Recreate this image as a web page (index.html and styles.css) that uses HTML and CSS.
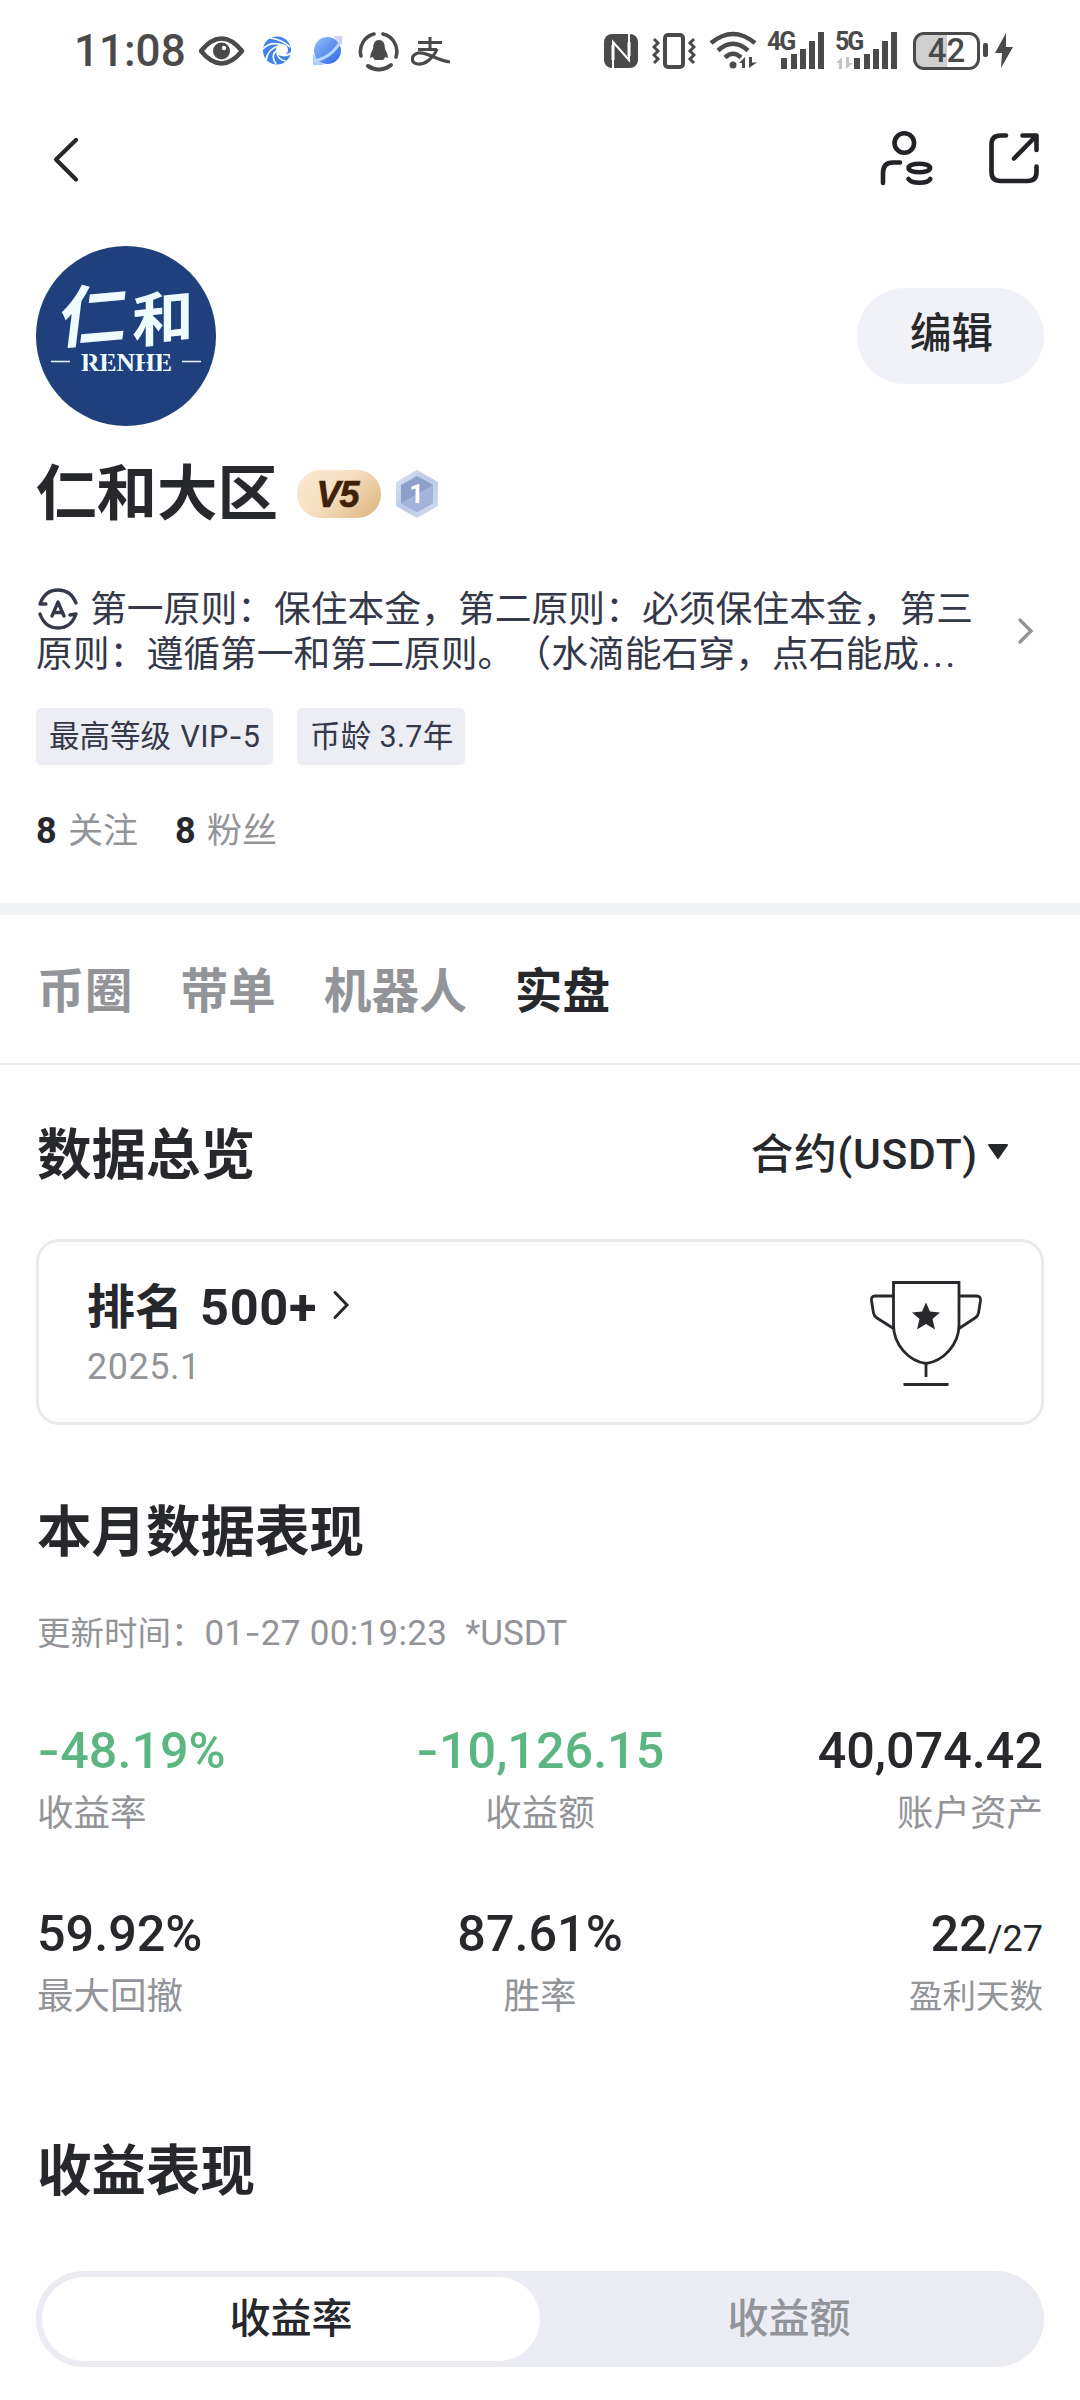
FILE: index.html
```html
<!DOCTYPE html>
<html lang="zh-CN">
<head>
<meta charset="utf-8">
<title>仁和大区</title>
<link rel="stylesheet" href="styles.css">
</head>
<body>
<div class="page">
  <div class="status">
    <div class="status-left">
      <span class="time">11:08</span>
      <svg width="46" height="40" viewBox="199 32 46 40"><path d="M201 52Q221.500 27 242 52Q221.500 77 201 52Z" fill="none" stroke="#4a4a4a" stroke-width="4.500" stroke-linejoin="round"/><circle cx="221.500" cy="52" r="8.500" fill="#4a4a4a"/><circle cx="224" cy="49" r="2.200" fill="#fff"/></svg>
      <svg class="ml-swirl" width="30" height="40" viewBox="262 32 30 40"><circle cx="277" cy="51.500" r="14" fill="#3f82ea"/><circle cx="282" cy="51" r="6" fill="#fff"/><g fill="none" stroke="#fff" stroke-width="1.700"><path d="M270 39Q281 40 290 48"/><path d="M263 50Q270 42 282 46"/><path d="M266 61Q268 50 278 47"/><path d="M276 65Q270 57 277 51"/><path d="M286 62Q278 61 277 54"/><path d="M291 54Q286 58 281 56"/></g></svg>
      <svg class="ml-planet" width="32" height="40" viewBox="311 32 32 40"><defs><linearGradient id="pl" x1="0" y1="0" x2="1" y2="1"><stop offset="0" stop-color="#8fc2f8"/><stop offset="1" stop-color="#2f62e8"/></linearGradient></defs><path d="M333 37H342V46Z" fill="#d9cdf2"/><path d="M313 55V66H324Z" fill="#a9d0fb"/><circle cx="327.500" cy="51.500" r="13.500" fill="url(#pl)"/><path d="M314 62Q331 59 341 42" fill="none" stroke="#b8d8ff" stroke-width="3"/></svg>
      <svg class="ml-qq" width="42" height="42" viewBox="358 30 42 42"><g fill="none" stroke="#4a4a4a" stroke-linecap="round"><path d="M361 56A18 18 0 0 1 374 34" stroke-width="3.500"/><path d="M383 34A18 18 0 0 1 396 57" stroke-width="3.500"/><path d="M391 65A19 19 0 0 1 368 66" stroke-width="4"/></g><path d="M379 40q6 0 6 9q3 5 3 9l-3-1q-1 3-2 3h-8q-1 0-2-3l-3 1q0-4 3-9q0-9 6-9Z" fill="#4a4a4a"/></svg>
      <svg class="ml-ali" width="40" height="34" viewBox="411 34 40 34"><g fill="none" stroke="#4a4a4a" stroke-width="3"><path d="M418 42.500H442M430 37V49M418 49.500H437"/><path d="M437 49C433 59 424 65 418 64C410 63 411 55 418 53C427 51 437 61 450 62" stroke-width="3.200"/></g></svg>
    </div>
    <div class="status-right">
      <svg width="34" height="36" viewBox="604 33 34 36"><rect x="604" y="34" width="34" height="34" rx="8" fill="#4a4a4a"/><path d="M613 68V42L629 60V33" fill="none" stroke="#fff" stroke-width="2"/><path d="M613 45V60M629 42V56" stroke="#fff" stroke-width="3"/></svg>
      <svg class="ml-vib" width="44" height="38" viewBox="652 32 44 38"><rect x="665" y="35" width="18" height="32" rx="3" fill="none" stroke="#4a4a4a" stroke-width="4"/><g fill="none" stroke="#4a4a4a" stroke-width="3"><path d="M654 39l4 4l-4 4l4 4l-4 4l4 4l-4 4M694 39l-4 4l4 4l-4 4l4 4l-4 4l4 4"/></g></svg>
      <svg class="ml-wifi" width="48" height="40" viewBox="709 31 48 40"><g fill="none" stroke="#4a4a4a" stroke-width="4.500"><path d="M711 43Q733 25 755 43M718 50.500Q733 37 748 50.500M725 57.500Q733 50 741 57.500"/></g><circle cx="733" cy="65" r="3.500" fill="#4a4a4a"/><path d="M745 57V68H742V63H739ZM749 57V68L757 62.500H752V57Z" fill="#4a4a4a"/></svg>
      <div class="signal ml-4g"><span class="net">4G</span><svg width="58" height="38" viewBox="767 32 58 38"><path d="M781 58h6v11h-6ZM791 54h6v15h-6ZM800 49h6v20h-6ZM809 41h6v28h-6ZM818 32h6v37h-6Z" fill="#4a4a4a"/></svg></div>
      <div class="signal ml-5g"><span class="net">5G</span><svg width="64" height="38" viewBox="835 32 64 38"><path d="M842 57V69H839V63H836ZM846 57V69L853 63H849V57Z" fill="#c4c4c4"/><path d="M854 58h6v11h-6ZM864 54h6v15h-6ZM873 49h6v20h-6ZM882 41h6v28h-6ZM891 32h6v37h-6Z" fill="#4a4a4a"/></svg></div>
      <div class="battery"><span>42</span></div>
      <svg class="ml-bolt" width="32" height="38" viewBox="982 32 32 38"><rect x="983" y="43" width="5" height="14" rx="2" fill="#4a4a4a"/><path d="M1006 33L995 53H1002L1001 68L1013 47H1006Z" fill="#4a4a4a"/></svg>
    </div>
  </div>

  <div class="nav">
    <svg width="30" height="50" viewBox="50 134 30 50"><path d="M76 140L56 159.500L76 179.500" fill="none" stroke="#26282c" stroke-width="4.200" stroke-linecap="round" stroke-linejoin="round"/></svg>
    <svg width="164" height="60" viewBox="878 128 164 60"><g fill="none" stroke="#212327" stroke-width="4.600" stroke-linecap="round" stroke-linejoin="round"><circle cx="904.300" cy="142" r="9.800"/><path d="M883 182V172Q883 161.500 893 161.500H900"/><ellipse cx="919.300" cy="167" rx="10.800" ry="4.300"/><path d="M908.500 178Q911 181.800 919.500 181.800T930.300 178"/><path d="M1006 134.500H1000.500Q991.500 134.500 991.500 143.500V171Q991.500 180 1000.500 180H1027.500Q1036.500 180 1036.500 171V165.500M1014 157.500L1036 135M1022.500 134.500H1036.500V149"/></g></svg>
  </div>

  <div class="profile">
    <div class="avatar-row">
      <svg class="avatar" viewBox="0 0 180 180"><circle cx="90" cy="90" r="90" fill="#1f3f7d"/><g fill="#effcff"><text class="brush" transform="translate(21 97) rotate(-5) skewX(-12)" textLength="68" lengthAdjust="spacingAndGlyphs">仁</text><text class="brush brush-small" transform="translate(96 97) rotate(-6) skewX(-6)" textLength="62" lengthAdjust="spacingAndGlyphs">和</text><text class="stencil" x="45" y="125" textLength="91" lengthAdjust="spacingAndGlyphs">RENHE</text></g><path d="M15 115.500H34M146 115.500H165" stroke="#effcff" stroke-width="1.500"/><path d="M52.500 105V126M71.500 105V126M110 105V126M126.500 105V126" stroke="#1f3f7d" stroke-width="1.300"/></svg>
      <button class="edit">编辑</button>
    </div>
    <div class="name-row">
      <h1>仁和大区</h1>
      <span class="vip">V5</span>
      <svg class="hex" width="42" height="48" viewBox="0 0 42 48"><defs><linearGradient id="hx" x1="0" y1="0" x2="1" y2="1"><stop offset="0" stop-color="#dbe6f7"/><stop offset=".5" stop-color="#b9c8e6"/><stop offset="1" stop-color="#d9e2f5"/></linearGradient></defs><path d="M21 0L42 12V36L21 48L0 36V12Z" fill="url(#hx)"/><path d="M21 6L37 15V33L21 42L5 33V15Z" fill="#8da0cb"/><path d="M5 33L37 15V33L21 42Z" fill="#a3b3da"/><text x="20.500" y="33" text-anchor="middle" class="hex-num">1</text></svg>
    </div>
    <div class="bio">
      <p><svg class="bio-icon" width="40" height="42" viewBox="0 0 40 42"><g fill="none" stroke="#343848" stroke-width="3.300" stroke-linecap="round" stroke-linejoin="round"><path d="M2 16Q7 2 20 2Q33 2 38 15M2 16H8M38 26Q33 40 20 40Q7 40 2 26M38 26L32 27M14 28L20 14L26 28M16.500 24.500H23.500"/></g></svg>第一原则：保住本金，第二原则：必须保住本金，第三<br>原则：遵循第一和第二原则。（水滴能石穿，点石能成<span class="dots">...</span></p>
      <svg width="18" height="28" viewBox="0 0 18 28"><path d="M3 3L14 14L3 25" fill="none" stroke="#929498" stroke-width="3.400" stroke-linecap="round"/></svg>
    </div>
    <div class="tags"><span class="tag tag-level">最高等级 <span class="vip-level">VIP<span class="dash">-</span>5</span></span><span class="tag tag-age">币龄 3.7年</span></div>
    <div class="follow"><b>8</b><span>关注</span><b>8</b><span>粉丝</span></div>
  </div>

  <div class="tabs"><span>币圈</span><span>带单</span><span>机器人</span><span class="active">实盘</span></div>

  <div class="overview">
    <h2>数据总览</h2>
    <div class="select">合约(USDT)<svg width="22" height="16" viewBox="0 0 22 16"><path d="M2 1H20L11 14Z" fill="#26282c" stroke="#26282c" stroke-width="2" stroke-linejoin="round"/></svg></div>
  </div>

  <div class="rank">
    <div>
      <div class="rank-title">排名 <span>500+</span><svg width="18" height="30" viewBox="0 0 18 30"><path d="M3 2.500L15 15L3 27.500" fill="none" stroke="#26282c" stroke-width="3" stroke-linecap="round"/></svg></div>
      <div class="rank-date">2025.1</div>
    </div>
    <svg width="114" height="108" viewBox="870 1280 114 108"><g fill="none" stroke="#26282c" stroke-width="2.800"><path d="M894.500 1282.500H960V1325C960 1345 944 1361 927 1363.500C910 1361 894.500 1345 894.500 1325ZM894.500 1296H876Q872 1296 872.500 1300.500L874.500 1313Q875 1316 878 1318L894.500 1328.500M960 1296H977.500Q982 1296 981.500 1300.500L979.500 1313Q979 1316 976 1318L960 1328.500M927 1363V1377M904.500 1384.500H949.500"/></g><path d="M927 1302.500L931 1311.500L941 1312.500L933.500 1319L936 1329.500L927 1324L918 1329.500L920.500 1319L913 1312.500L923 1311.500Z" fill="#26282c"/></svg>
  </div>

  <div class="month">
    <h2>本月数据表现</h2>
    <p class="updated">更新时间：<span class="stamp">01<span class="dash">-</span>27 00:19:23</span><span class="unit">*USDT</span></p>
    <div class="metrics">
      <div><b class="down"><span class="dash">-</span>48.19%</b><span>收益率</span></div>
      <div><b class="down"><span class="dash">-</span>10,126.15</b><span>收益额</span></div>
      <div><b>40,074.42</b><span>账户资产</span></div>
      <div><b>59.92%</b><span>最大回撤</span></div>
      <div><b>87.61%</b><span>胜率</span></div>
      <div><b>22<small>/27</small></b><span class="days">盈利天数</span></div>
    </div>
  </div>

  <div class="profit">
    <h2>收益表现</h2>
    <div class="segment"><span class="on">收益率</span><span>收益额</span></div>
  </div>
</div>
</body>
</html>
```

FILE: styles.css
```css
* { box-sizing: border-box; margin: 0; padding: 0; }
body { background: #fefefe; color: #26282c; font-family: Roboto, "Noto Sans CJK SC", sans-serif; text-spacing-trim: space-all; }
svg { display: block; flex: none; }
.page { width: 1080px; height: 2400px; overflow: hidden; display: flex; flex-direction: column; }
.dash { font-family: Inter, sans-serif; line-height: 0; }

.status { height: 102px; padding: 0 66px 0 74px; display: flex; align-items: center; justify-content: space-between; color: #4a4a4a; }
.status-left, .status-right { display: flex; align-items: center; }
.time { width: 125px; font-size: 44px; line-height: 50px; font-weight: 500; }
.ml-swirl { margin-left: 17px; }
.ml-planet { margin-left: 19px; }
.ml-qq { margin-left: 15px; }
.ml-ali { margin-left: 11px; }
.ml-vib { margin-left: 14px; }
.ml-wifi { margin-left: 13px; }
.ml-4g { margin-left: 10px; }
.ml-5g { margin-left: 10px; }
.signal { position: relative; }
.net { position: absolute; left: 0; top: -2px; font-size: 25px; line-height: 24px; font-weight: 700; letter-spacing: -2px; }
.battery { width: 67px; height: 38px; margin-left: 14px; border: 3.500px solid #4a4a4a; border-radius: 11px; background: linear-gradient(90deg, #cfcfcf 50%, #fff 50%); display: flex; align-items: center; justify-content: center; font-size: 33px; line-height: 32px; font-weight: 500; }
.ml-bolt { margin-left: 2px; }

.nav { height: 114px; padding: 0 38px 0 50px; display: flex; align-items: center; justify-content: space-between; }

.profile { height: 687px; padding: 30px 36px 0; }
.avatar-row { display: flex; align-items: center; justify-content: space-between; }
.avatar { width: 180px; height: 180px; }
.brush { font: 700 66px "Noto Sans CJK SC", sans-serif; }
.brush-small { font-size: 58px; }
.stencil { font: 700 26px "Liberation Serif", serif; }
.edit { display: flex; align-items: center; justify-content: center; width: 187px; height: 96px; border: 0; border-radius: 48px; background: #f1f2f7; color: #26282c; font: 500 41.500px/60px Roboto, "Noto Sans CJK SC", sans-serif; padding: 0 0 4px 2px; }
.name-row { display: flex; align-items: center; height: 88px; margin-top: 24px; }
h1 { width: 261px; padding-top: 2px; font-size: 60.500px; line-height: 88px; font-weight: 700; white-space: nowrap; }
.vip { width: 84px; height: 48px; padding-right: 3px; border-radius: 24px; background: linear-gradient(135deg, #fbead2, #f6dfc0 45%, #dcb17b); color: #3e2207; font: italic 700 36px/49px "Liberation Sans", sans-serif; text-align: center; letter-spacing: -1px; -webkit-text-stroke: .700px #3e2207; }
.hex { margin-left: 15px; }
.hex-num { font: 700 25px Roboto, sans-serif; fill: #fff; }
.bio { display: flex; align-items: center; justify-content: space-between; margin-top: 48px; height: 90px; padding-right: 9px; }
.bio p { padding-top: 1px; font-size: 36.800px; line-height: 45px; color: #343848; white-space: nowrap; }
.bio-icon { display: inline-block; vertical-align: -8px; margin: 0 12px 0 2px; }
.dots { letter-spacing: 2.500px; margin-left: 2px; }
.tags { display: flex; gap: 24px; margin-top: 32px; }
.tag { height: 57px; border-radius: 5px; background: #ededf4; color: #343848; font-size: 30.500px; line-height: 57px; padding-left: 13px; white-space: nowrap; }
.tag-level { width: 237px; }
.tag-age { width: 168px; padding-left: 13px; letter-spacing: .300px; }
.vip-level { margin-left: 2px; letter-spacing: .300px; }
.follow { display: flex; align-items: center; margin-top: 43px; height: 46px; font-size: 35px; line-height: 46px; }
.follow b { width: 32px; font-size: 36px; }
.follow span { width: 107px; padding-top: 1px; color: #929498; }

.tabs { height: 162px; border-top: 12px solid #f1f3f5; border-bottom: 2px solid #ecedee; padding: 5px 0 0 37px; display: flex; align-items: center; gap: 48px; font-size: 47.700px; line-height: 60px; font-weight: 700; color: #929498; }
.tabs .active { color: #26282c; }

h2 { font-size: 54.500px; line-height: 72px; font-weight: 700; }
.overview { height: 174px; padding: 5px 71px 0 37px; display: flex; align-items: center; justify-content: space-between; }
.select { display: flex; align-items: center; font-size: 42.500px; line-height: 60px; font-weight: 500; letter-spacing: .800px; }
.select svg { margin-left: 9px; margin-top: -6px; }

.rank { height: 186px; margin: 0 36px; border: 3px solid #e9eaec; border-radius: 23px; padding: 3px 58px 0 48px; display: flex; align-items: center; justify-content: space-between; }
.rank-title { display: flex; align-items: center; font-size: 48px; line-height: 66px; font-weight: 700; gap: 15px; }
.rank-title span { font-size: 50.500px; letter-spacing: .700px; padding-left: 2px; }
.rank-title svg { margin-top: -6px; }
.rank-date { font-size: 36px; line-height: 52px; color: #929498; letter-spacing: .500px; }

.month { padding: 71px 37px 0; }
.updated { margin-top: 41px; font-size: 33.500px; line-height: 50px; color: #929498; display: flex; }
.stamp { font-size: 35px; letter-spacing: .300px; }
.unit { margin-left: 18px; font-size: 35px; }
.metrics { display: grid; grid-template-columns: repeat(3, 1fr); row-gap: 57px; margin-top: 59px; }
.metrics div { display: flex; flex-direction: column; align-items: center; }
.metrics div:nth-child(3n+1) { align-items: flex-start; }
.metrics div:nth-child(3n) { align-items: flex-end; }
.metrics b { height: 66px; font-size: 50.300px; line-height: 66px; font-weight: 500; }
.metrics .down { color: #5bb681; }
.metrics small { font-size: 36px; line-height: 0; font-weight: 400; }
.metrics div > span { font-size: 36.500px; line-height: 60px; color: #929498; }
.metrics div > .days { font-size: 33.500px; }

.profit { padding: 108px 36px 0; }
.profit h2 { padding-left: 1px; }
.segment { margin-top: 64px; height: 96px; border-radius: 48px; background: #ebecf4; border: 6px solid #ebecf2; display: grid; grid-template-columns: 1fr 1fr; font-size: 41px; line-height: 84px; font-weight: 500; text-align: center; color: #929498; }
.segment .on { background: #fff; border-radius: 42px; color: #26282c; }
```
